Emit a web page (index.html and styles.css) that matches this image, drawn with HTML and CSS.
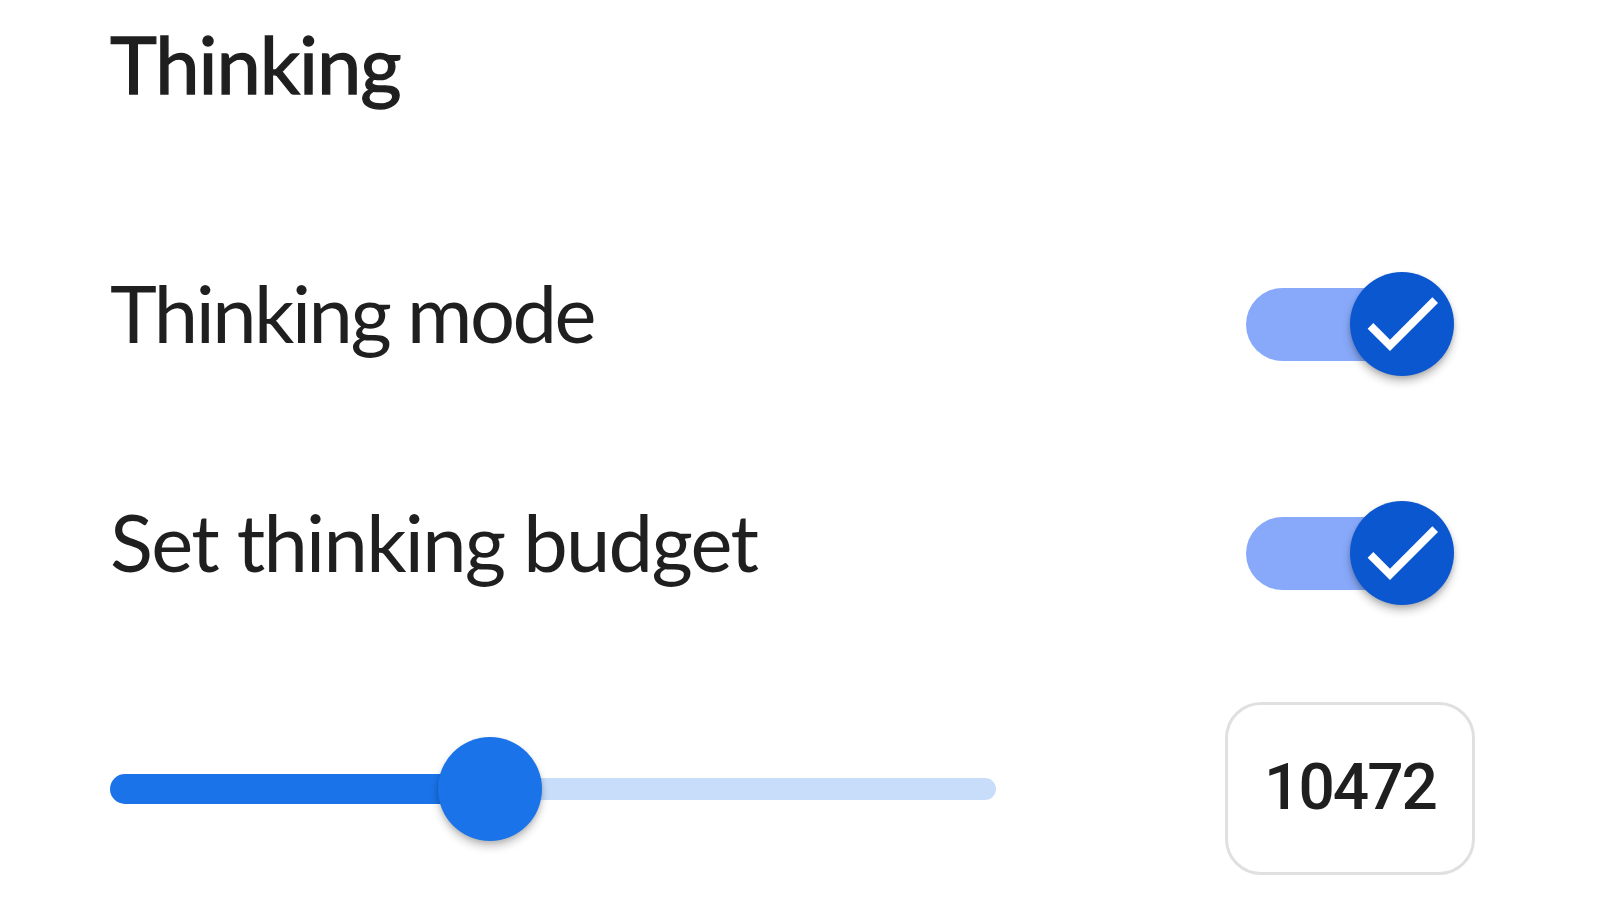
FILE: index.html
```html
<!DOCTYPE html>
<html lang="en">
<head>
<meta charset="utf-8">
<title>Thinking</title>
<link rel="stylesheet" href="styles.css">
</head>
<body>
<div class="panel">
  <h1 class="title">Thinking</h1>
  <div class="row row-mode">
    <span class="label label-mode">Thinking mode</span>
    <div class="switch">
      <div class="switch-track"></div>
      <div class="switch-thumb">
        <svg class="check" viewBox="0 0 24 24"><path d="M9 16.17L4.83 12l-1.42 1.41L9 19 21 7l-1.41-1.41z"/></svg>
      </div>
    </div>
  </div>
  <div class="row row-budget">
    <span class="label label-budget">Set thinking budget</span>
    <div class="switch">
      <div class="switch-track"></div>
      <div class="switch-thumb">
        <svg class="check" viewBox="0 0 24 24"><path d="M9 16.17L4.83 12l-1.42 1.41L9 19 21 7l-1.41-1.41z"/></svg>
      </div>
    </div>
  </div>
  <div class="row row-slider">
    <div class="slider">
      <div class="slider-active" style="width: 42.9%"></div>
      <div class="slider-inactive"></div>
      <div class="slider-thumb" style="left: 42.9%"></div>
    </div>
    <div class="number-box">10472</div>
  </div>
</div>
</body>
</html>
```

FILE: styles.css
```css
html, body {
  margin: 0;
  padding: 0;
  background: #ffffff;
}

body {
  font-family: Lato, "Noto Sans", "Liberation Sans", sans-serif;
  color: #1f1f1f;
}

.panel {
  padding: 24px 125px 0 110px;
  display: flex;
  flex-direction: column;
}

.title {
  margin: 0;
  font-size: 79.5px;
  line-height: 80px;
  font-weight: 400;
  letter-spacing: -1.1px;
  -webkit-text-stroke: 1.3px #1f1f1f;
}

.row {
  display: flex;
  align-items: center;
  justify-content: space-between;
}

.row-mode {
  height: 120px;
  margin-top: 160px;
}

.row-budget {
  height: 120px;
  margin-top: 109px;
}

.label {
  font-size: 79.5px;
  line-height: 80px;
  font-weight: 400;
  margin-bottom: 22px;
}

.label-mode {
  letter-spacing: -2.5px;
}

.label-budget {
  letter-spacing: -1.7px;
}

.switch {
  position: relative;
  width: 208px;
  height: 104px;
  margin-right: 21px;
  display: flex;
  align-items: center;
}

.switch-track {
  width: 190px;
  height: 73px;
  border-radius: 37px;
  background: #88a9fa;
}

.switch-thumb {
  position: absolute;
  right: 0;
  top: 0;
  width: 104px;
  height: 104px;
  border-radius: 50%;
  background: #0b57d0;
  box-shadow: 0 6px 8px rgba(0, 0, 0, 0.22), 0 2px 4px rgba(0, 0, 0, 0.14);
  display: flex;
  align-items: center;
  justify-content: center;
}

.check {
  width: 96px;
  height: 96px;
  margin-top: -3px;
  fill: #ffffff;
}

.row-slider {
  margin-top: 89px;
  height: 173px;
}

.slider {
  position: relative;
  width: 886px;
  height: 104px;
  display: flex;
  align-items: center;
}

.slider-active {
  height: 30px;
  background: #1a73e8;
  border-radius: 15px 0 0 15px;
}

.slider-inactive {
  flex: 1;
  height: 22px;
  background: #c8ddf9;
  border-radius: 0 11px 11px 0;
}

.slider-thumb {
  position: absolute;
  top: 0;
  width: 104px;
  height: 104px;
  margin-left: -52px;
  border-radius: 50%;
  background: #1a73e8;
  box-shadow: 0 6px 8px rgba(0, 0, 0, 0.2), 0 2px 4px rgba(0, 0, 0, 0.12);
}

.number-box {
  box-sizing: border-box;
  width: 250px;
  height: 173px;
  border: 3px solid #e0e0e0;
  border-radius: 36px;
  display: flex;
  align-items: center;
  justify-content: center;
  font-family: Roboto, "Noto Sans", sans-serif;
  font-size: 64px;
  font-weight: 500;
  letter-spacing: -2px;
  line-height: 1;
  padding-bottom: 2px;
}
```
